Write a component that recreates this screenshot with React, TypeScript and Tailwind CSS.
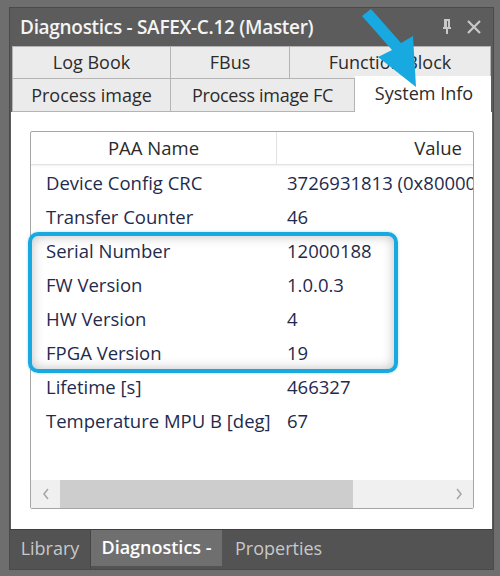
import React from "react";

const rows = [
  ["Device Config CRC", "3726931813 (0x80000000)"],
  ["Transfer Counter", "46"],
  ["Serial Number", "12000188"],
  ["FW Version", "1.0.0.3"],
  ["HW Version", "4"],
  ["FPGA Version", "19"],
  ["Lifetime [s]", "466327"],
  ["Temperature MPU B [deg]", "67"],
];

const font = { fontFamily: '"Open Sans", "Noto Sans", sans-serif' };

function Tab({ label, className = "" }: { label: string; className?: string }) {
  return (
    <div
      className={
        "flex items-center justify-center bg-[#ebebeb] border-r border-b border-[#b4b4b4] text-[18px] text-[#2b2b2b] " +
        className
      }
    >
      {label}
    </div>
  );
}

export default function App() {
  return (
    <div className="relative w-[500px] h-[576px] bg-[#6e6e6e] overflow-hidden pt-[7px] pl-[9px]" style={font}>
      <div className="w-[485px] h-[563px] border border-[#4a4a4a] bg-[#5c5c5c] flex flex-col">
        {/* title bar */}
        <div className="h-[38px] flex items-center pl-[10px] pr-[12px]">
          <span className="text-[19px] font-semibold text-[#f4f4f4] tracking-[-0.3px]">
            Diagnostics - SAFEX-C.12 (Master)
          </span>
          <div className="ml-auto flex items-center gap-[14px]">
            <svg width="12" height="16" viewBox="0 0 12 16">
              <path d="M3 1h6M4 1v8M8 1v8M2 9h8M6 9v6" stroke="#c9c9c9" strokeWidth="2" fill="none" />
              <rect x="4" y="2" width="2" height="6" fill="#c9c9c9" />
            </svg>
            <svg width="14" height="14" viewBox="0 0 14 14">
              <path d="M1 1L13 13M13 1L1 13" stroke="#c9c9c9" strokeWidth="2.2" />
            </svg>
          </div>
        </div>

        {/* tab rows */}
        <div className="px-[2px]">
          <div className="flex h-[33px] border-t border-l border-[#b4b4b4]">
            <Tab label="Log Book" className="w-[158px]" />
            <Tab label="FBus" className="w-[119px]" />
            <Tab label="Function Block" className="flex-1" />
          </div>
          <div className="flex h-[33px] border-l border-[#b4b4b4]">
            <Tab label="Process image" className="w-[158px]" />
            <Tab label="Process image FC" className="w-[184px] tracking-[-0.3px]" />
            <div className="flex-1 -mt-[3px] bg-white flex items-center justify-center text-[18px] text-[#2b2b2b] pb-[2px] pl-[2px]">
              System Info
            </div>
          </div>
        </div>

        {/* content */}
        <div className="relative flex-1 mx-[1px] bg-white pt-[19px] pl-[19px] pr-[18px] pb-[20px] flex">
          <div className="flex-1 border border-[#a6a6a6] rounded-[2px] flex flex-col overflow-hidden">
            <div className="flex h-[33px] border-b border-[#e2e2e2] shadow-[0_1px_2px_rgba(0,0,0,0.06)] text-[18.5px] text-[#2a2a2a]">
              <div className="w-[246px] flex items-center justify-center border-r border-[#e2e2e2]">PAA Name</div>
              <div className="flex-1 flex items-center justify-end pr-[11px]">Value</div>
            </div>
            <div className="pt-[1px]">
              {rows.map(([name, value]) => (
                <div key={name} className="flex h-[34px] items-center text-[18.5px] text-[#1f2b4d]">
                  <div className="w-[246px] pl-[15px] whitespace-nowrap">{name}</div>
                  <div className="flex-1 min-w-0 pl-[10px] whitespace-nowrap overflow-hidden">{value}</div>
                </div>
              ))}
            </div>
            <div className="flex-1" />
            <div className="h-[28px] bg-[#f0f0f0] flex items-center">
              <div className="w-[29px] flex items-center justify-center">
                <svg width="8" height="12" viewBox="0 0 8 12">
                  <path d="M6 1L2 6l4 5" stroke="#a8a8a8" strokeWidth="1.6" fill="none" />
                </svg>
              </div>
              <div className="w-[293px] h-full bg-[#cdcdcd]" />
              <div className="flex-1" />
              <div className="w-[29px] flex items-center justify-center">
                <svg width="8" height="12" viewBox="0 0 8 12">
                  <path d="M2 1l4 5-4 5" stroke="#a8a8a8" strokeWidth="1.6" fill="none" />
                </svg>
              </div>
            </div>
          </div>

          {/* highlight annotation */}
          <div className="absolute left-[17px] top-[120px] w-[370px] h-[141px] rounded-[10px] border-[4px] border-[#19a9e1] shadow-[inset_0_0_12px_rgba(0,0,0,0.25),0_0_3px_rgba(25,169,225,0.4)]" />
        </div>

        {/* bottom tab strip */}
        <div className="h-[40px] bg-[#535353] border-t border-[#3f3f3f] flex text-[18px]">
          <div className="w-[81px] flex items-center justify-center text-[#c8c8c8] border-r border-[#454545] pb-[2px]">
            Library
          </div>
          <div className="w-[131px] mb-[3px] bg-[#6f6f6f] flex items-center justify-center text-white font-semibold pb-[2px]">
            Diagnostics -
          </div>
          <div className="pl-[13px] flex items-center text-[#c8c8c8] pb-[2px]">Properties</div>
        </div>
      </div>

      {/* arrow annotation */}
      <svg className="absolute left-0 top-0" width="500" height="576" viewBox="0 0 500 576">
        <path d="M362 16 L371 9 L401 43 L413 36 L416 87 L378 57 L392 50 Z" fill="#19a9e1" />
      </svg>
    </div>
  );
}
